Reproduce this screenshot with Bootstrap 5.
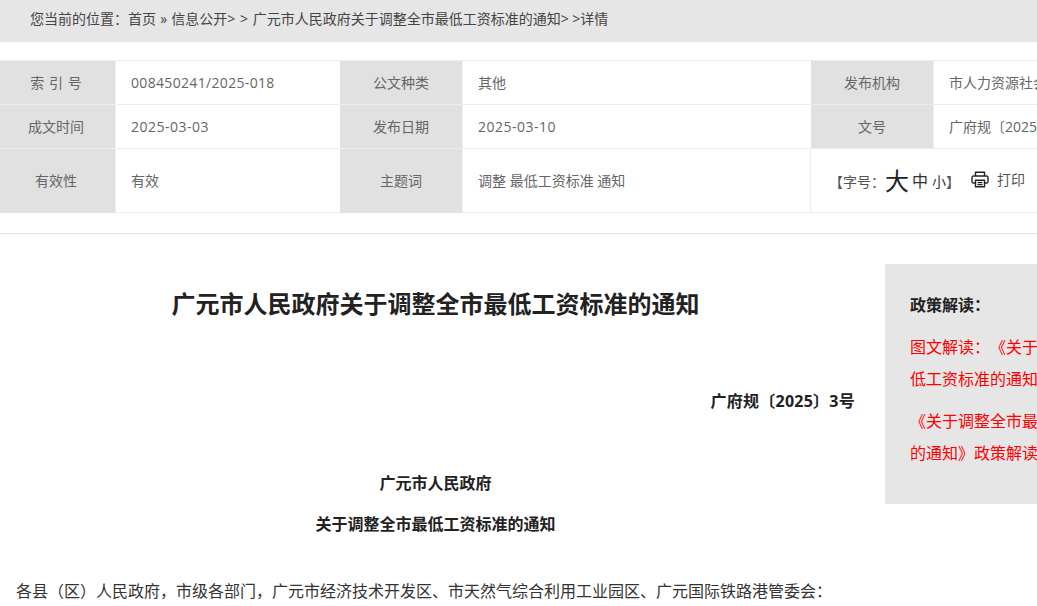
<!DOCTYPE html>
<html lang="zh-CN">
<head>
<meta charset="utf-8">
<title>详情</title>
<link rel="stylesheet" href="https://cdn.jsdelivr.net/npm/bootstrap@5.3.0/dist/css/bootstrap.min.css">
<style>
html,body{height:606px;overflow:hidden}
body{font-family:"Open Sans","Noto Sans CJK SC",sans-serif;color:#333;background:#fff;width:1160px;text-spacing-trim:space-all}
.crumbs{height:42px;background:#e6e6e6;padding-left:30px;font-size:14px;line-height:38px;color:#444;word-spacing:.5px}
.crumb-gap{letter-spacing:.3px}
.crumb-end{word-spacing:0;letter-spacing:0}
.meta-grid{margin-top:18px;display:grid;grid-template-columns:116px 224px 123px 348px 123px 226px;grid-template-rows:44px 44px 64px;border-top:1px solid #eee;border-bottom:1px solid #eee;height:153px;font-size:14px;color:#666}
.meta-key,.meta-val{display:flex;align-items:center;border-bottom:1px solid #eee}
.meta-key{justify-content:center;background:#e1e1e1;border-right:1px solid #eee;color:#666}
.meta-key.first-key{padding-right:3px;word-spacing:1px}
.meta-val{padding-left:15px;white-space:nowrap;overflow:hidden}
.digits{letter-spacing:.33px}
.digits-date{letter-spacing:.5px}
.meta-tools{grid-column:span 2;border-left:1px solid #eee;margin-left:-1px;padding-left:18px;padding-bottom:0;display:flex;align-items:center;border-bottom:0;font-size:14px;color:#555}
.row-last{border-bottom:0;padding-bottom:2px}
.size-l{font-size:24px;color:#222;margin:0 3px 0 0;line-height:1}
.size-m{font-size:16px;margin-right:4px;color:#333}
.size-s{font-size:14px;color:#333}
.print-btn{display:flex;align-items:center;gap:8px;margin-left:11px;margin-top:-4px}
.rule-line{border-top:1px solid #e6e6e6;margin-top:20px}
.body-wrap{display:flex;align-items:flex-start;margin-top:30px}
.article-col{width:871px;flex:none;color:#222}
.doc-title{font-size:24px;font-weight:700;text-align:center;line-height:30px;margin:25px 0 0;color:#222}
.doc-no{font-size:16px;font-weight:700;text-align:right;padding-right:16px;line-height:24px;margin:70px 0 0;letter-spacing:.25px}
.doc-org{font-size:16px;font-weight:700;text-align:center;line-height:24px;margin:58px 0 0}
.doc-sub{font-size:16px;font-weight:700;text-align:center;line-height:24px;margin:17px 0 0}
.doc-para{font-size:16px;line-height:24px;margin:43px 0 0;padding-left:16px;color:#333;white-space:nowrap}
.side-box{margin-left:14px;width:265px;height:240px;flex:none;background:#e6e6e6;padding:29px 32px 0 25px;font-size:16px}
.side-head{font-weight:700;color:#222;line-height:24px;margin:0 0 14px}
.side-link{display:block;color:#f00;line-height:32px;text-decoration:none;margin-bottom:10px}
</style>
</head>
<body>
<div class="crumbs">您当前的位置：首页 » 信息公开<span class="crumb-gap">&gt; &gt; </span>广元市人民政府关于调整全市最低工资标准的通知<span class="crumb-gap crumb-end">&gt; &gt;</span>详情</div>
<div class="meta-grid">
  <div class="meta-key first-key">索 引 号</div><div class="meta-val digits">008450241/2025-018</div>
  <div class="meta-key">公文种类</div><div class="meta-val">其他</div>
  <div class="meta-key">发布机构</div><div class="meta-val">市人力资源社会保障局</div>
  <div class="meta-key first-key">成文时间</div><div class="meta-val digits-date">2025-03-03</div>
  <div class="meta-key">发布日期</div><div class="meta-val digits-date">2025-03-10</div>
  <div class="meta-key">文号</div><div class="meta-val">广府规〔2025〕3号</div>
  <div class="meta-key first-key row-last">有效性</div><div class="meta-val row-last">有效</div>
  <div class="meta-key row-last">主题词</div><div class="meta-val row-last">调整 最低工资标准 通知</div>
  <div class="meta-val meta-tools">
    <span>【字号：</span><span class="size-l">大</span><span class="size-m">中</span><span class="size-s">小</span><span>】</span>
    <span class="print-btn">
      <svg width="18" height="17" viewBox="0 0 18 17" fill="none" stroke="#222" stroke-width="1.4"><path d="M4.5 5V1.2h9V5"/><path d="M4 12H2.5A1.6 1.6 0 0 1 1 10.4V6.6A1.6 1.6 0 0 1 2.5 5h13A1.6 1.6 0 0 1 17 6.6v3.8a1.6 1.6 0 0 1-1.5 1.6H14"/><path d="M4.5 9.3h9v6.5h-9z"/><path d="M6.5 11.6h5M6.5 13.6h5"/></svg>
      打印
    </span>
  </div>
</div>
<div class="rule-line"></div>
<div class="body-wrap">
  <div class="article-col">
    <h1 class="doc-title">广元市人民政府关于调整全市最低工资标准的通知</h1>
    <p class="doc-no">广府规〔2025〕3号</p>
    <p class="doc-org">广元市人民政府</p>
    <p class="doc-sub">关于调整全市最低工资标准的通知</p>
    <p class="doc-para">各县（区）人民政府，市级各部门，广元市经济技术开发区、市天然气综合利用工业园区、广元国际铁路港管委会：</p>
  </div>
  <aside class="side-box">
    <p class="side-head">政策解读：</p>
    <a class="side-link" href="#">图文解读：《关于调整全市最低工资标准的通知》</a>
    <a class="side-link" href="#">《关于调整全市最低工资标准的通知》政策解读</a>
  </aside>
</div>
<script src="https://cdn.jsdelivr.net/npm/bootstrap@5.3.0/dist/js/bootstrap.bundle.min.js"></script>
</body>
</html>
